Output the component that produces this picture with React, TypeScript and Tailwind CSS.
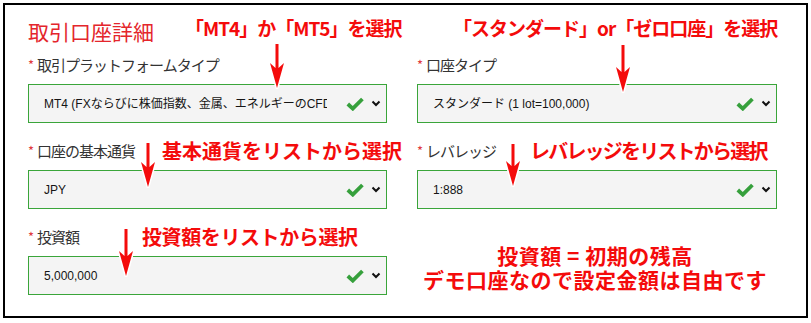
import React from "react"

const cjk = "font-['Noto_Sans_CJK_JP',sans-serif]"
const mixed = "font-['Liberation_Sans','Noto_Sans_CJK_JP',sans-serif]"

function Arrow({ left, top, height }: { left: number; top: number; height: number }) {
  const h = height
  const d = `M7.5,1 H10.5 V${h - 21} L16,${h - 26} L9,${h - 1} L2,${h - 26} L7.5,${h - 21} Z`
  return (
    <svg
      className="absolute"
      style={{ left, top }}
      width={18}
      height={h}
      viewBox={`0 0 18 ${h}`}
    >
      <path d={d} fill="#f40b0b" stroke="#ffffff" strokeWidth={3} strokeLinejoin="round" paintOrder="stroke" />
    </svg>
  )
}

function Check() {
  return (
    <svg width={18} height={14} viewBox="0 0 18 14">
      <polyline points="1.8,7 6.8,11.6 16.4,2" fill="none" stroke="#36a03c" strokeWidth={3.8} />
    </svg>
  )
}

function Chevron() {
  return (
    <svg width={10} height={7} viewBox="0 0 10 7">
      <polyline points="1.5,1.5 5,5 8.5,1.5" fill="none" stroke="#111" strokeWidth={2} />
    </svg>
  )
}

function Label({ text }: { text: string }) {
  return (
    <span className={`flex items-center whitespace-nowrap text-[15px] tracking-[-1px] text-[#333] ${cjk}`}>
      <span className="mr-[4px] text-[13px] text-[#e0393e]">*</span>
      {text}
    </span>
  )
}

function Select({ value, clip }: { value: string; clip?: boolean }) {
  return (
    <div className="flex h-[39px] items-center border border-[#3aa53a] bg-[#f4f4f4] pl-[15px] pr-[5px]">
      <span
        className={`whitespace-nowrap text-[12px] text-[#151515] ${mixed} ${clip ? "w-[283px] overflow-hidden" : ""}`}
      >
        {value}
      </span>
      <span className="ml-auto flex items-center gap-[7px]">
        <Check />
        <Chevron />
      </span>
    </div>
  )
}

const note = `whitespace-nowrap font-bold text-[#f40b0b] ${cjk}`

export default function App() {
  return (
    <div className="h-[323px] w-[811px] bg-white p-[3px]">
      <div className="relative h-[315px] border-2 border-black pl-[23px] pr-[27px] pt-[11px]">
        {/* title + top notes */}
        <div className="grid h-[30px] grid-cols-[359px_360px] gap-x-[30px]">
          <div className="flex items-start">
            <h1 className={`w-[157px] shrink-0 text-[21px] leading-[30px] text-[#e4262c] ${cjk}`}>取引口座詳細</h1>
            <span className={`${note} text-[19px] leading-[23px] tracking-[-1px]`}>「MT4」か「MT5」を選択</span>
          </div>
          <div className="flex items-start pl-[36px]">
            <span className={`${note} text-[19px] leading-[23px] tracking-[-1px]`}>「スタンダード」or「ゼロ口座」を選択</span>
          </div>
        </div>

        {/* fields */}
        <div className="mt-[6px] grid grid-cols-[359px_360px] gap-x-[30px] gap-y-[15px]">
          <div>
            <div className="mb-[6px] flex h-[26px] items-center">
              <Label text="取引プラットフォームタイプ" />
            </div>
            <Select value="MT4 (FXならびに株価指数、金属、エネルギーのCFD)" clip />
          </div>
          <div>
            <div className="mb-[6px] flex h-[26px] items-center">
              <Label text="口座タイプ" />
            </div>
            <Select value="スタンダード (1 lot=100,000)" />
          </div>

          <div>
            <div className="mb-[6px] flex h-[26px] items-center">
              <div className="w-[134px] shrink-0">
                <Label text="口座の基本通貨" />
              </div>
              <span className={`${note} text-[20px]`}>基本通貨をリストから選択</span>
            </div>
            <Select value="JPY" />
          </div>
          <div>
            <div className="mb-[6px] flex h-[26px] items-center">
              <div className="w-[113px] shrink-0">
                <Label text="レバレッジ" />
              </div>
              <span className={`${note} text-[20px] tracking-[-1.8px]`}>レバレッジをリストから選択</span>
            </div>
            <Select value="1:888" />
          </div>

          <div>
            <div className="mb-[6px] flex h-[26px] items-center">
              <div className="w-[114px] shrink-0">
                <Label text="投資額" />
              </div>
              <span className={`${note} text-[20px] tracking-[-0.4px]`}>投資額をリストから選択</span>
            </div>
            <Select value="5,000,000" />
          </div>
          <div className="flex flex-col items-center pt-[19px] pr-[4px]">
            <span className={`${note} text-[21px] leading-[24px] tracking-[0.5px]`}>投資額 = 初期の残高</span>
            <span className={`${note} text-[21px] leading-[24px] tracking-[0.5px]`}>デモ口座なので設定金額は自由です</span>
          </div>
        </div>

        <Arrow left={263} top={38} height={46} />
        <Arrow left={609} top={39} height={49} />
        <Arrow left={134} top={137} height={46} />
        <Arrow left={499} top={138} height={44} />
        <Arrow left={112} top={223} height={49} />
      </div>
    </div>
  )
}
